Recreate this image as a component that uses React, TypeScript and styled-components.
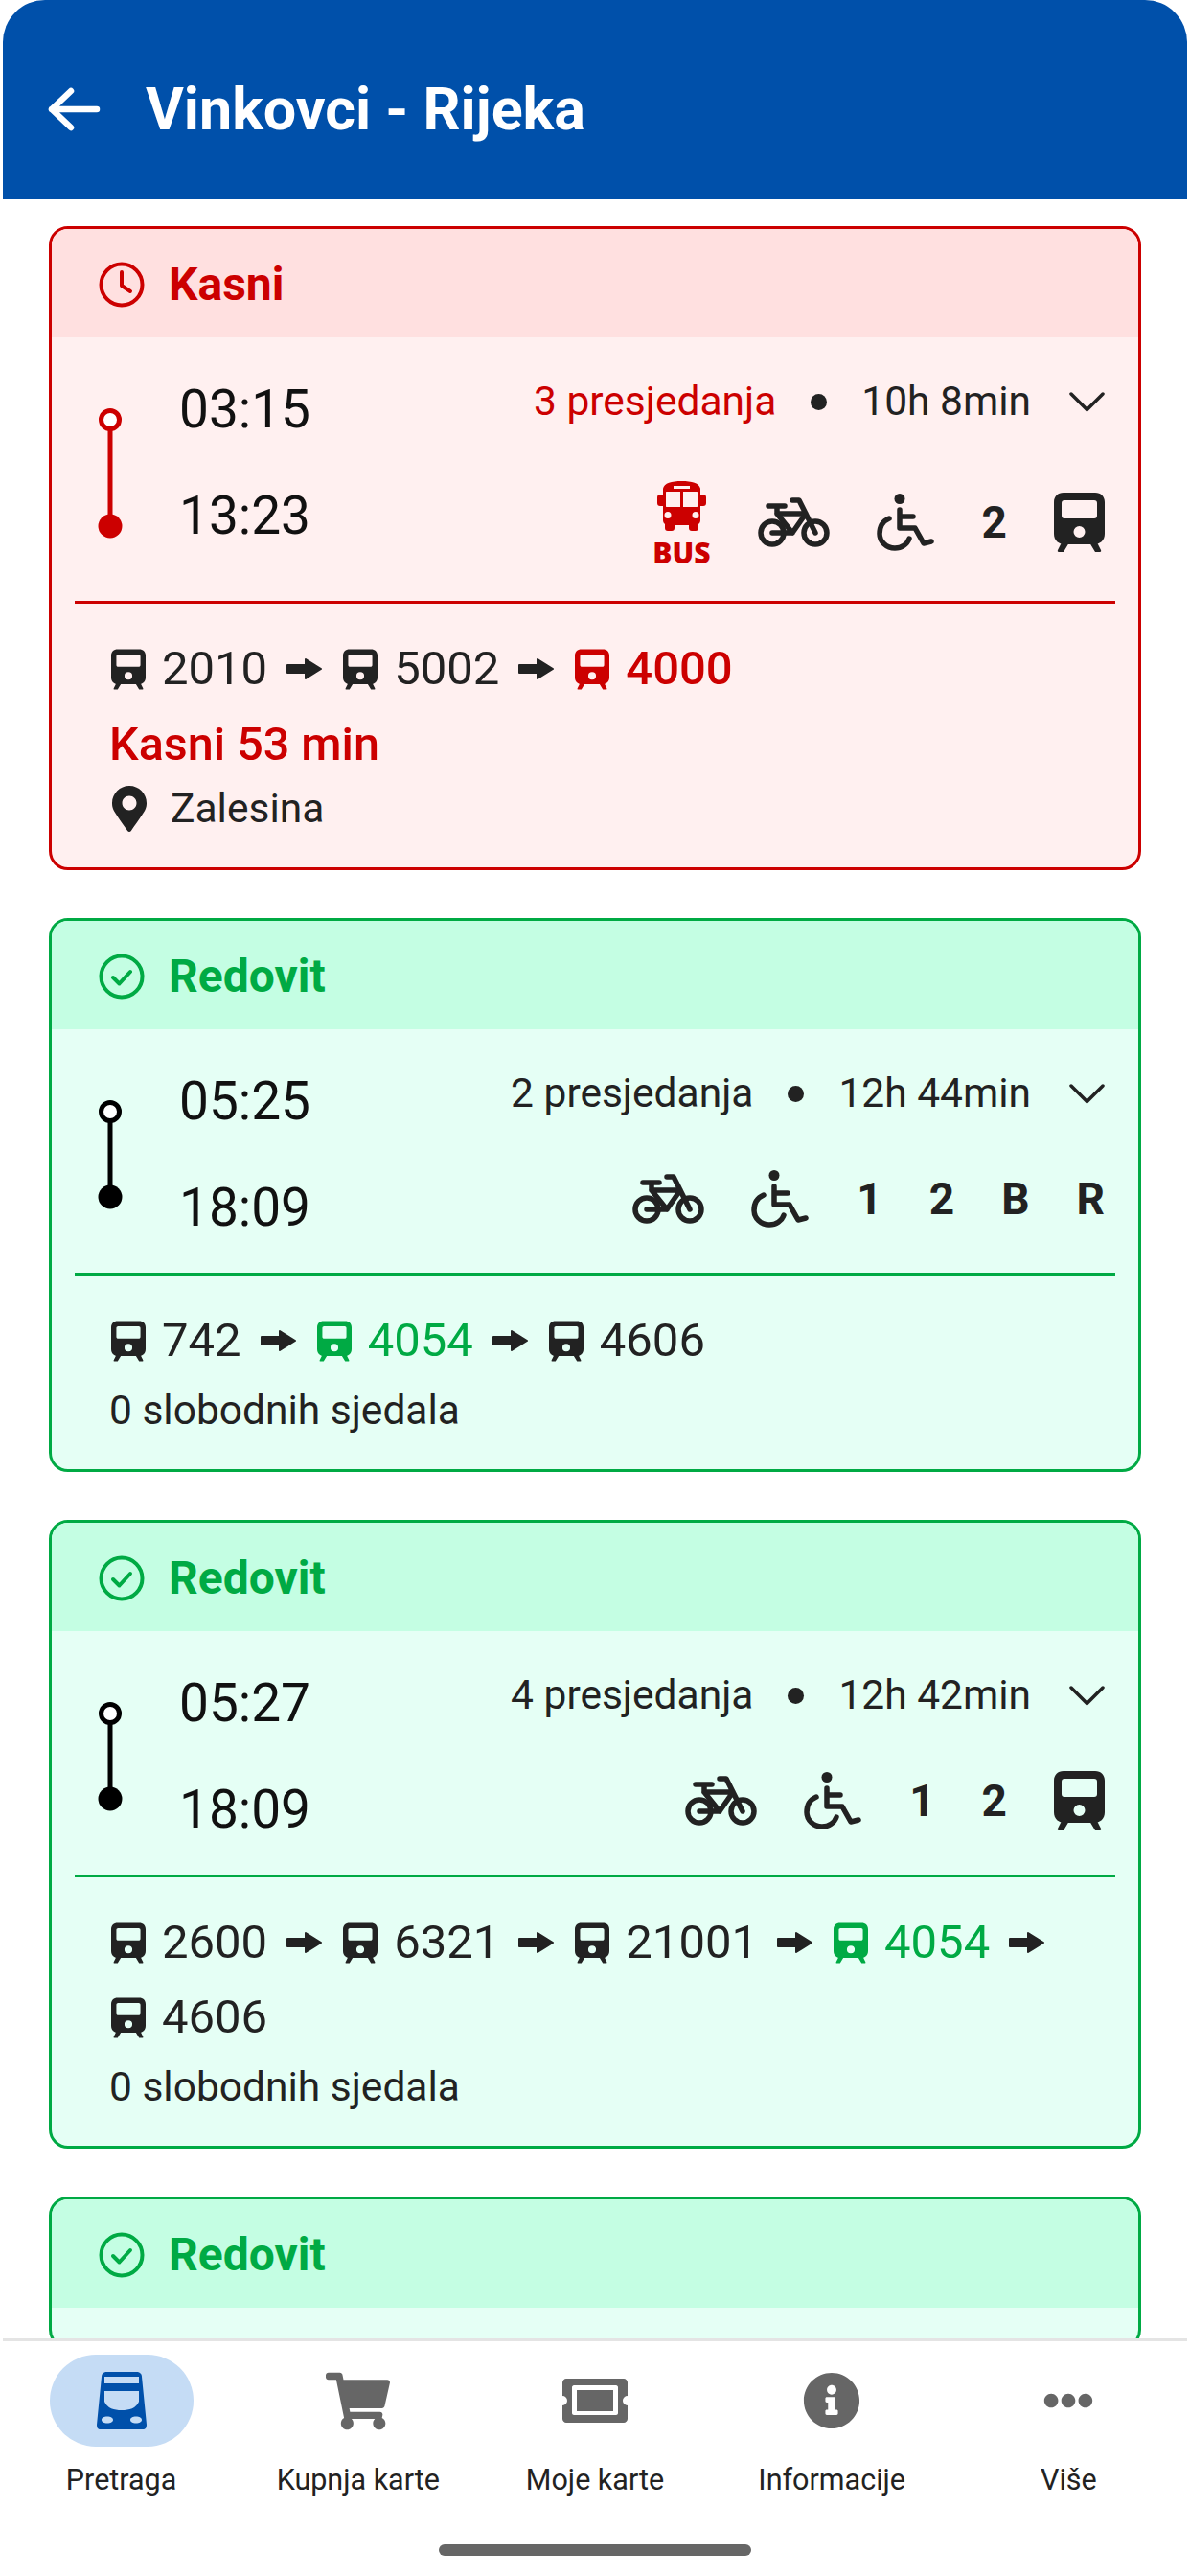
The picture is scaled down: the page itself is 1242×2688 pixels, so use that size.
import React from 'react';
import styled, { createGlobalStyle } from 'styled-components';
import { FaShoppingCart, FaInfoCircle, FaEllipsisH, FaMapMarkerAlt } from 'react-icons/fa';

const Global = createGlobalStyle`
  html, body { margin: 0; padding: 0; background: #fff; }
  body { font-family: Roboto, "Noto Sans", sans-serif; color: #222; }
`;

const RED = '#cc0000';
const GREEN = '#00aa44';

const Screen = styled.div`
  width: 1242px; height: 2688px; display: flex; flex-direction: column; overflow: hidden; background: #fff;
`;
const Header = styled.header`
  height: 208px; flex: none; margin: 0 3px; background: #0050aa; border-radius: 44px 44px 0 0;
  display: flex; align-items: center; gap: 47px; padding: 20px 0 0 47px; box-sizing: border-box; color: #fff;
`;
const Title = styled.h1`
  margin: 0; font-size: 61px; font-weight: 700; line-height: 1; letter-spacing: 0;
`;
const List = styled.main`
  flex: 1; min-height: 0; overflow: hidden; display: flex; flex-direction: column; gap: 50px; padding: 28px 51px 0;
`;
const Card = styled.section<{ $c: string; $bg: string }>`
  flex: none; border: 3px solid ${p => p.$c}; border-radius: 20px; background: ${p => p.$bg}; overflow: hidden;
`;
const CardHead = styled.div<{ $c: string; $bg: string }>`
  height: 113px; box-sizing: border-box; background: ${p => p.$bg}; color: ${p => p.$c}; display: flex; align-items: center; gap: 25px; padding: 2px 0 0 49px;
  font-size: 48px; font-weight: 700;
`;
const Body = styled.div`
  padding: 0 24px;
`;
const Stub = styled.div`
  height: 40px;
`;
const Main = styled.div<{ $tall?: boolean }>`
  display: flex; height: ${p => (p.$tall ? 278 : 257)}px; box-sizing: border-box; border-bottom: 3px solid; padding-top: 42px;
`;
const Rail = styled.div<{ $c: string }>`
  width: 83px; flex: none; margin-left: 24px; padding-top: 31px; box-sizing: content-box;
  color: ${p => p.$c}; svg { display: block; }
`;
const Times = styled.div`
  width: 200px; flex: none; display: flex; flex-direction: column; gap: 50px; padding-top: 3px; margin-left: 2px;
  font-size: 55px; line-height: 61px; color: #111;
`;
const Right = styled.div`
  flex: 1; display: flex; flex-direction: column; align-items: flex-end; padding-right: 11px;
`;
const Summary = styled.div`
  display: flex; align-items: center; font-size: 42.500px; line-height: 50px; height: 50px;
`;
const Changes = styled.span<{ $c?: string }>`
  color: ${p => p.$c || '#222'};
`;
const Dot = styled.span`
  width: 17px; height: 17px; border-radius: 50%; background: #222; margin: 0 36px;
`;
const Chevron = styled.svg`
  margin-left: 40px; display: block;
`;
const Amenities = styled.div<{ $tall?: boolean }>`
  display: flex; align-items: center; justify-content: flex-end; gap: 49px; height: 80px; margin-top: ${p => (p.$tall ? 61 : 45)}px;
  svg { display: block; }
`;
const Letter = styled.span`
  font-size: 46px; font-weight: 700; color: #222;
`;
const BusBadge = styled.div`
  display: flex; flex-direction: column; align-items: center; gap: 11px; color: ${RED};
  font-family: "Open Sans", sans-serif; font-size: 30px; font-weight: 800; line-height: 24px;
`;
const Details = styled.div`
  padding: 29px 0 31px 36px;
`;
const Trains = styled.div`
  display: flex; flex-wrap: wrap; align-items: center; font-size: 49px; line-height: 78px; column-gap: 20px;
`;
const Leg = styled.span<{ $c?: string; $b?: boolean }>`
  display: inline-flex; align-items: center; gap: 17px; color: ${p => p.$c || '#222'}; font-weight: ${p => (p.$b ? 500 : 400)};
  svg { margin-left: 2px; }
`;
const LateLine = styled.div`
  color: ${RED}; font-weight: 500; font-size: 48.500px; line-height: 60px; margin-top: 10px;
`;
const Seats = styled.div`
  font-size: 42.500px; line-height: 60px; color: #222; margin-top: 4px;
`;
const Station = styled.div`
  display: flex; align-items: center; gap: 25px; font-size: 42.500px; line-height: 60px; margin-top: 7px; padding-left: 3px;
  svg { margin: 0 -6px; }
`;
const Tabs = styled.nav`
  flex: none; height: 248px; margin: 0 3px; background: #fff; border-top: 3px solid #e4e4e4; box-sizing: border-box; border-radius: 0 0 40px 40px;
  display: flex; flex-direction: column; align-items: center;
`;
const TabRow = styled.div`
  width: 100%; display: grid; grid-template-columns: repeat(5, 1fr); padding: 14px 0 0 0;
`;
const Tab = styled.div`
  display: flex; flex-direction: column; align-items: center; font-size: 30.500px; line-height: 36px; color: #222;
`;
const TabIcon = styled.div<{ $on?: boolean }>`
  width: 150px; height: 96px; border-radius: 48px; display: flex; align-items: center; justify-content: center;
  background: ${p => (p.$on ? '#c5dcf5' : 'transparent')}; color: ${p => (p.$on ? '#0050aa' : '#666')}; margin-bottom: 17px;
`;
const HomeBar = styled.div`
  width: 326px; height: 12px; border-radius: 6px; background: #666; margin-top: 49px;
`;

const BackArrow = () => (
  <svg width="55" height="46" viewBox="0 0 55 46" fill="none" stroke="currentColor" strokeWidth="6.500" strokeLinecap="round" strokeLinejoin="round">
    <path d="M4 23h47M24 4 4 23l20 19" />
  </svg>
);
const ClockIcon = () => (
  <svg width="48" height="48" viewBox="0 0 48 48" fill="none" stroke="currentColor" strokeWidth="4" strokeLinecap="round" strokeLinejoin="round">
    <circle cx="24" cy="24" r="21.500" />
    <path d="M24 11v14l9 6" />
  </svg>
);
const CheckIcon = () => (
  <svg width="48" height="48" viewBox="0 0 48 48" fill="none" stroke="currentColor" strokeWidth="4" strokeLinecap="round" strokeLinejoin="round">
    <circle cx="24" cy="24" r="21.500" />
    <path d="m15 25 6.500 6.500L33 19" />
  </svg>
);
const ChevronDown = () => (
  <Chevron width="37" height="22" viewBox="0 0 37 22" fill="none" stroke="currentColor" strokeWidth="3.500" strokeLinecap="round" strokeLinejoin="round">
    <path d="M2 3l16.500 16.500L35 3" />
  </Chevron>
);
const TrainIcon = ({ w = 53, h = 62 }: { w?: number; h?: number }) => (
  <svg width={w} height={h} viewBox="0 0 53 62" fill="currentColor">
    <path fillRule="evenodd" d="M10 0h33c6 0 10 4 10 10v33c0 7-5 11-11 11H11C5 54 0 50 0 43V10C0 4 4 0 10 0zM11 8c-2 0-3 1-3 3v13c0 2 1 3 3 3h31c2 0 3-1 3-3V11c0-2-1-3-3-3zM26.500 35a6 6 0 1 0 0 12 6 6 0 0 0 0-12z" />
    <path d="M8 52h8l-6 10H5c-1 0-1.500-1-1-2zM37 52h8l4 8c.500 1 0 2-1 2h-5z" />
  </svg>
);
const BusIcon = () => (
  <svg width="51" height="52" viewBox="0 0 51 52" fill="currentColor">
    <path fillRule="evenodd" d="M25.500 0C36 0 44 2 45 8v6h3c2 0 3 1 3 3v6c0 2-1 3-3 3h-3v15c0 2-1 3-2 4v4c0 2-1 3-3 3h-4c-2 0-3-1-3-3v-3H18v3c0 2-1 3-3 3h-4c-2 0-3-1-3-3v-4c-1-1-2-2-2-4V26H3c-2 0-3-1-3-3v-6c0-2 1-3 3-3h3V8C7 2 15 0 25.500 0zM17 5v3h17V5zM10 11c-1 0-1 .500-1 1v14c0 .500 0 1 1 1h14V11zm17 0v16h14c1 0 1-.500 1-1V12c0-.500 0-1-1-1zM11 32a3.500 3.500 0 1 0 0 7 3.500 3.500 0 0 0 0-7zm29 0a3.500 3.500 0 1 0 0 7 3.500 3.500 0 0 0 0-7z" />
  </svg>
);
const BikeIcon = () => (
  <svg width="75" height="52" viewBox="0 0 75 52" fill="none" stroke="#222" strokeWidth="5.500" strokeLinecap="round" strokeLinejoin="round">
    <circle cx="15" cy="37" r="12" />
    <circle cx="60" cy="37" r="12" />
    <path d="M11 9h17M20 9v8M20 17h30M15 37h21L20 17M36 37 50 17M36 3h7l17 34" />
  </svg>
);
const WheelIcon = () => (
  <svg width="61" height="60" viewBox="0 0 61 60" fill="none" stroke="#222" strokeWidth="5.500" strokeLinecap="round" strokeLinejoin="round">
    <circle cx="24" cy="5.500" r="5.500" fill="#222" stroke="none" />
    <path d="M24 17v19h16l9 16 8-2M24 24h14" />
    <path d="M13 26C6 29 3 35 3 42c0 8 7 15 16 15 7 0 13-4 15-10" />
  </svg>
);
const NavTrain = () => (
  <svg width="52" height="60" viewBox="0 0 52 60" fill="currentColor">
    <path fillRule="evenodd" d="M11 0h30c4 0 6 2 6 5l5 50c0 3-1 5-4 5H4c-3 0-4-2-4-5L5 5c0-3 2-5 6-5zM8 5v7h36V5zM8 20v11c3 7 10 9 18 9s15-2 18-9V20zM11 46.500c-3.500 0-6 1.500-6 3.500s2.500 3.500 6 3.500 6-1.500 6-3.500-2.500-3.500-6-3.500zm30 0c-3.500 0-6 1.500-6 3.500s2.500 3.500 6 3.500 6-1.500 6-3.500-2.500-3.500-6-3.500z" />
  </svg>
);
const TicketIcon = () => (
  <svg width="68" height="46" viewBox="0 0 68 46" fill="currentColor">
    <path fillRule="evenodd" d="M4 0h60c2 0 4 2 4 4v14a5 5 0 0 0 0 10v14c0 2-2 4-4 4H4c-2 0-4-2-4-4V28a5 5 0 0 0 0-10V4c0-2 2-4 4-4zm8 7c-1 0-2 1-2 2v27c0 1 1 2 2 2h44c1 0 2-1 2-2V9c0-1-1-2-2-2zm3 5h38v22H15z" />
  </svg>
);
const ThickArrow = () => (
  <svg width="37" height="22" viewBox="0 0 37 22" fill="#222" stroke="#222" strokeWidth="2" strokeLinejoin="round">
    <path d="M1 7h19V1l16 10-16 10v-6H1z" />
  </svg>
);
const RailMark = ({ span }: { span: number }) => (
  <svg width="26" height={span + 26} viewBox={`0 0 26 ${span + 26}`}>
    <circle cx="13" cy="13" r="9.500" fill="#fff" stroke="currentColor" strokeWidth="5" />
    <rect x="10.500" y="22" width="5" height={span - 10} fill="currentColor" />
    <circle cx="13" cy={span + 13} r="12.500" fill="currentColor" />
  </svg>
);

type L = { n: string; hi?: boolean; bold?: boolean };
type CardData = {
  late?: boolean; dep: string; arr: string; changes: string; dur: string;
  am: string[]; legs: L[]; seats?: string;
};

const data: CardData[] = [
  { late: true, dep: '03:15', arr: '13:23', changes: '3 presjedanja', dur: '10h 8min', am: ['bus', 'bike', 'wheel', '2', 'train'],
    legs: [{ n: '2010' }, { n: '5002' }, { n: '4000', hi: true, bold: true }] },
  { dep: '05:25', arr: '18:09', changes: '2 presjedanja', dur: '12h 44min', am: ['bike', 'wheel', '1', '2', 'B', 'R'],
    legs: [{ n: '742' }, { n: '4054', hi: true }, { n: '4606' }], seats: '0 slobodnih sjedala' },
  { dep: '05:27', arr: '18:09', changes: '4 presjedanja', dur: '12h 42min', am: ['bike', 'wheel', '1', '2', 'train'],
    legs: [{ n: '2600' }, { n: '6321' }, { n: '21001' }, { n: '4054', hi: true }, { n: '4606' }], seats: '0 slobodnih sjedala' },
];

const Amenity = ({ a }: { a: string }) => {
  if (a === 'bus') return <BusBadge><BusIcon />BUS</BusBadge>;
  if (a === 'bike') return <BikeIcon />;
  if (a === 'wheel') return <WheelIcon />;
  if (a === 'train') return <Letter><TrainIcon /></Letter>;
  return <Letter>{a}</Letter>;
};

const JourneyHead = ({ late }: { late?: boolean }) => (
  <CardHead $c={late ? RED : GREEN} $bg={late ? '#ffe0e0' : '#c4fee3'}>
    {late ? <ClockIcon /> : <CheckIcon />}
    {late ? 'Kasni' : 'Redovit'}
  </CardHead>
);

const JourneyCard = ({ d }: { d: CardData }) => {
  const c = d.late ? RED : GREEN;
  return (
    <Card $c={c} $bg={d.late ? '#fff0f0' : '#e5fff5'}>
      <JourneyHead late={d.late} />
      <Body>
        <Main $tall={d.late} style={{ borderColor: c }}>
          <Rail $c={d.late ? RED : '#000'}><RailMark span={d.late ? 111 : 89} /></Rail>
          <Times><span>{d.dep}</span><span>{d.arr}</span></Times>
          <Right>
            <Summary>
              <Changes $c={d.late ? RED : undefined}>{d.changes}</Changes>
              <Dot />
              <span>{d.dur}</span>
              <ChevronDown />
            </Summary>
            <Amenities $tall={d.late}>{d.am.map((a, i) => <Amenity key={i} a={a} />)}</Amenities>
          </Right>
        </Main>
        <Details>
          <Trains>
            {d.legs.map((l, i) => (
              <React.Fragment key={i}>
                <Leg $c={l.hi ? c : undefined} $b={l.bold}><TrainIcon w={36} h={43} />{l.n}</Leg>
                {i < d.legs.length - 1 && <ThickArrow />}
              </React.Fragment>
            ))}
          </Trains>
          {d.late && <LateLine>Kasni 53 min</LateLine>}
          {d.late && <Station><FaMapMarkerAlt size={48} color="#222" />Zalesina</Station>}
          {d.seats && <Seats>{d.seats}</Seats>}
        </Details>
      </Body>
    </Card>
  );
};

export default function App() {
  return (
    <Screen>
      <Global />
      <Header>
        <BackArrow />
        <Title>Vinkovci - Rijeka</Title>
      </Header>
      <List>
        {data.map((d, i) => <JourneyCard key={i} d={d} />)}
        <Card $c={GREEN} $bg="#e5fff5">
          <JourneyHead />
          <Stub />
        </Card>
      </List>
      <Tabs>
        <TabRow>
          <Tab><TabIcon $on><NavTrain /></TabIcon>Pretraga</Tab>
          <Tab><TabIcon><FaShoppingCart size={67} /></TabIcon>Kupnja karte</Tab>
          <Tab><TabIcon><TicketIcon /></TabIcon>Moje karte</Tab>
          <Tab><TabIcon><FaInfoCircle size={60} /></TabIcon>Informacije</Tab>
          <Tab><TabIcon><FaEllipsisH size={52} /></TabIcon>Više</Tab>
        </TabRow>
        <HomeBar />
      </Tabs>
    </Screen>
  );
}
